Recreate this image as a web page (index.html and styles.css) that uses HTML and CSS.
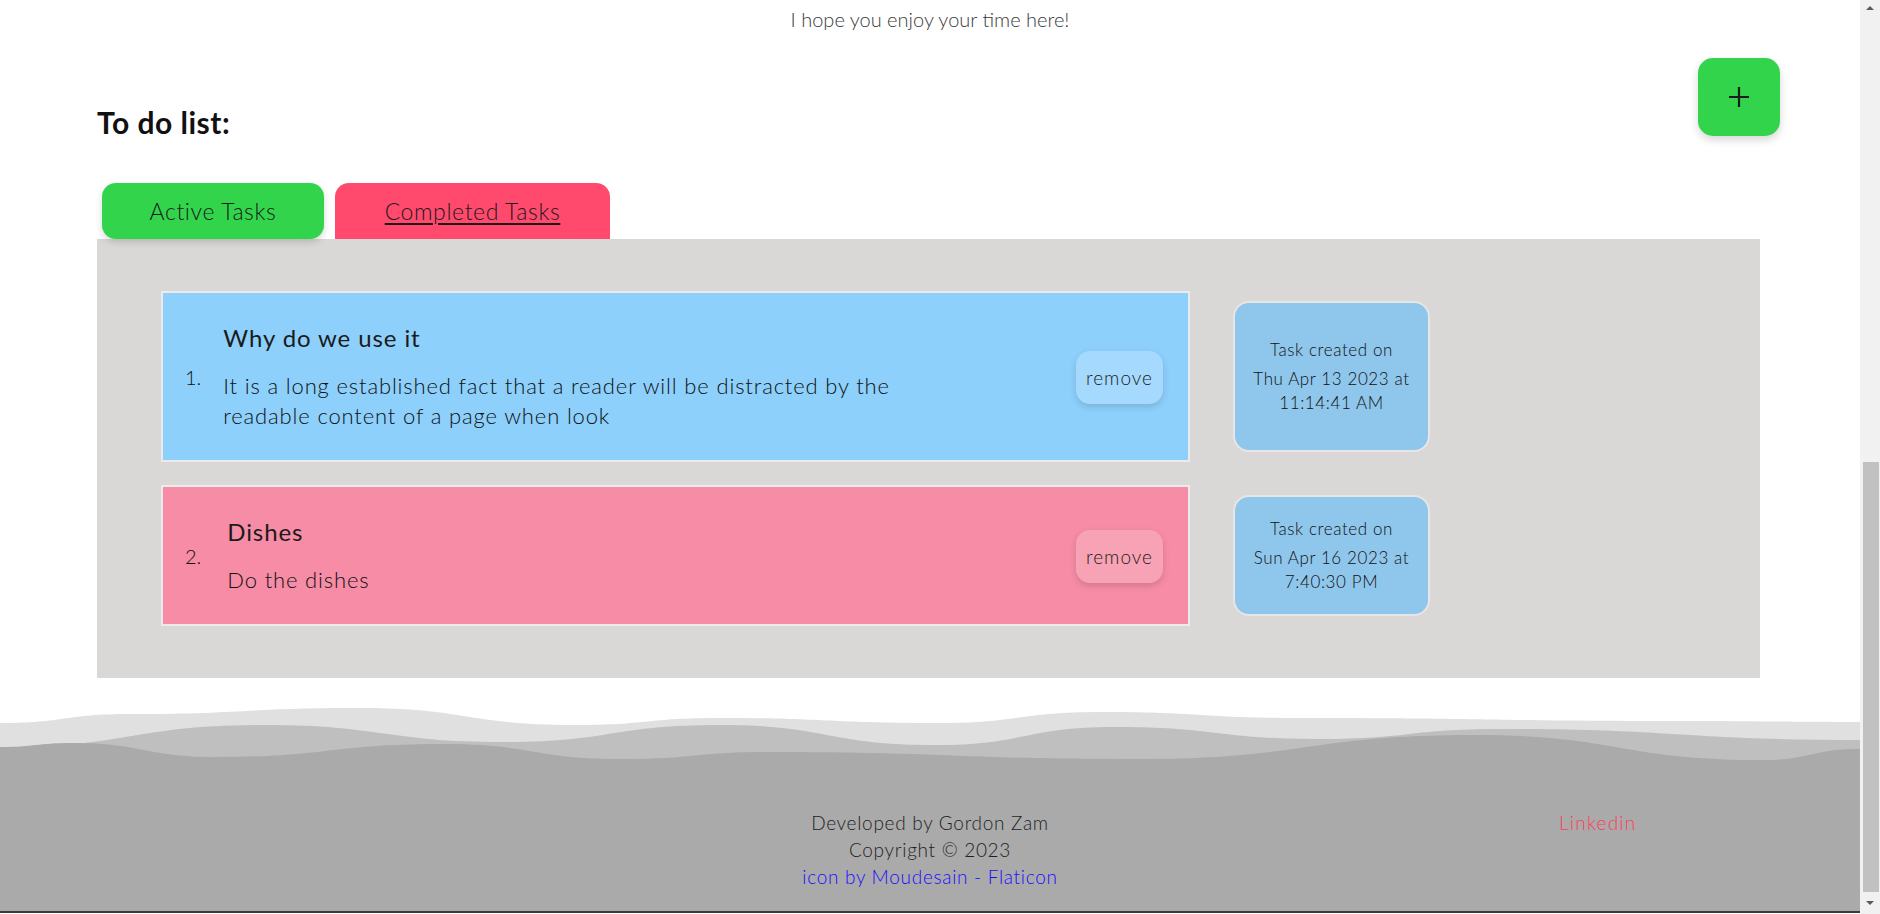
FILE: index.html
```html
<!DOCTYPE html>
<html lang="en">
<head>
<meta charset="utf-8">
<title>To do list</title>
<link rel="stylesheet" href="styles.css">
</head>
<body>
<div class="page">
  <div class="main">
    <p class="greeting">I hope you enjoy your time here!</p>
    <div class="header">
      <h2 class="title">To do list:</h2>
      <button class="add-btn" aria-label="Add task">
        <svg width="22" height="22" viewBox="0 0 22 22"><path d="M11 1v20M1 11h20" stroke="#1c1c1c" stroke-width="2.2" fill="none"/></svg>
      </button>
    </div>
    <div class="tabs">
      <button class="tab tab-active">Active Tasks</button>
      <button class="tab tab-completed">Completed Tasks</button>
    </div>
    <div class="panel">
      <ol class="task-list">
        <li class="task-row">
          <div class="task task-blue">
            <span class="num">1.</span>
            <div class="task-text">
              <h3 class="task-title">Why do we use it</h3>
              <p class="task-desc">It is a long established fact that a reader will be distracted by the readable content of a page when look</p>
            </div>
            <button class="remove remove-blue">remove</button>
          </div>
          <div class="date-card">
            <p class="date-label">Task created on</p>
            <p class="date-value">Thu Apr 13 2023 at<br>11:14:41 AM</p>
          </div>
        </li>
        <li class="task-row">
          <div class="task task-pink">
            <span class="num num-wide">2.</span>
            <div class="task-text">
              <h3 class="task-title">Dishes</h3>
              <p class="task-desc">Do the dishes</p>
            </div>
            <button class="remove remove-pink">remove</button>
          </div>
          <div class="date-card">
            <p class="date-label">Task created on</p>
            <p class="date-value">Sun Apr 16 2023 at<br>7:40:30 PM</p>
          </div>
        </li>
      </ol>
    </div>
    <footer class="footer">
      <svg class="waves" viewBox="0 0 1860 65" preserveAspectRatio="none">
        <path fill="#e0e0e0" d="M0,24 C65,24 65,15 130,15 C245,15 245,9 360,9 C467,9 467,26 575,26 C647,26 647,19 720,19 C827,19 827,24 935,24 C1019,24 1019,13 1103,13 C1201,13 1201,19 1300,19 C1490,19 1490,22 1679,22 C1770,22 1770,23 1860,23 L1860,65 L0,65 Z"/>
        <path fill="#bfbfbf" d="M0,48 C132,48 132,26 264,26 C384,26 384,43 504,43 C612,43 612,26 720,26 C827,26 827,46 935,46 C1025,46 1025,28 1115,28 C1217,28 1217,40 1319,40 C1409,40 1409,30 1499,30 C1680,30 1680,41 1860,41 L1860,65 L0,65 Z"/>
        <path fill="#aaaaaa" d="M0,48 C36,48 36,44 72,44 C144,44 144,58 216,58 C330,58 330,45 444,45 C533,45 533,60 623,60 C695,60 695,53 767,53 C953,53 953,60 1139,60 C1307,60 1307,36 1475,36 C1619,36 1619,61 1763,61 C1811,61 1811,50 1860,50 L1860,65 L0,65 Z"/>
      </svg>
      <div class="footer-body">
        <div class="footer-left"></div>
        <div class="footer-center">
          <p class="footer-line">Developed by Gordon Zam</p>
          <p class="footer-line">Copyright © 2023</p>
          <a class="footer-credit" href="#">icon by Moudesain - Flaticon</a>
        </div>
        <div class="footer-right">
          <a class="linkedin" href="#">Linkedin</a>
        </div>
      </div>
    </footer>
    <div class="bottom-line"></div>
  </div>
  <div class="scrollbar">
    <div class="sb-arrow sb-up"></div>
    <div class="sb-space"></div>
    <div class="sb-thumb"></div>
    <div class="sb-bottom"><div class="sb-arrow sb-down"></div></div>
  </div>
</div>
</body>
</html>
```
FILE: styles.css
```css
html, body {
  margin: 0;
  padding: 0;
}
body {
  font-family: Lato, "Liberation Sans", sans-serif;
  color: #1b1b1b;
  background: #fff;
}
.page {
  display: flex;
  height: 914px;
  overflow: hidden;
}
.main {
  flex: 1;
  min-width: 0;
  display: flex;
  flex-direction: column;
}
.greeting {
  margin: 5px 0 0;
  text-align: center;
  font-size: 20px;
  line-height: 28px;
  font-weight: 300;
  color: #3a3a3a;
}
.header {
  display: flex;
  justify-content: space-between;
  align-items: flex-start;
  height: 78px;
  margin-top: 25px;
  padding: 0 80px 0 97px;
}
.title {
  margin: 50px 0 0;
  font-size: 30px;
  line-height: 28px;
  letter-spacing: 0.5px;
  font-weight: 700;
  color: #111;
}
.add-btn {
  width: 82px;
  height: 78px;
  border: none;
  border-radius: 15px;
  background: #32d44c;
  box-shadow: 0 4px 9px rgba(0, 0, 0, 0.16);
  display: flex;
  align-items: center;
  justify-content: center;
  padding: 0;
}
.tabs {
  display: flex;
  gap: 11px;
  margin-top: 47px;
  padding-left: 102px;
}
.tab {
  height: 56px;
  border: none;
  padding: 0;
  font-family: inherit;
  font-size: 23px;
  letter-spacing: 0.6px;
  font-weight: 300;
  color: #1b1b1b;
}
.tab-active {
  width: 222px;
  border-radius: 14px;
  background: #32d44c;
  box-shadow: 0 3px 7px rgba(0, 0, 0, 0.16);
  position: relative;
  z-index: 1;
}
.tab-completed {
  width: 275px;
  border-radius: 14px 14px 0 0;
  background: #ff4a6d;
  text-decoration: underline;
  text-underline-offset: 3px;
}
.panel {
  margin: 0 100px 0 97px;
  background: #d9d8d6;
  padding: 52px 0 52px 64px;
}
.task-list {
  list-style: none;
  margin: 0;
  padding: 0;
  display: flex;
  flex-direction: column;
  gap: 23px;
}
.task-row {
  display: flex;
  gap: 43px;
}
.task {
  width: 1029px;
  box-sizing: border-box;
  border: 2px solid #ebebeb;
  display: flex;
  align-items: center;
  padding: 30px 25px 29px 22px;
}
.task-blue { background: #8dd0fc; }
.task-pink { background: #f78ca6; }
.num {
  font-size: 20px;
  font-weight: 300;
  color: #111;
  margin-right: 22px;
}
.num-wide {
  margin-right: 26px;
}
.task-text {
  flex: 1;
}
.task-title {
  margin: 0;
  font-size: 24px;
  line-height: 30px;
  letter-spacing: 0.9px;
  font-weight: 400;
}
.task-desc {
  margin: 18px 0 0;
  font-size: 22px;
  line-height: 30px;
  letter-spacing: 0.85px;
  font-weight: 300;
  color: #111;
  max-width: 700px;
}
.remove {
  width: 87px;
  height: 53px;
  border: none;
  border-radius: 14px;
  padding: 0;
  font-family: inherit;
  font-size: 19px;
  letter-spacing: 1px;
  font-weight: 300;
  color: #1b1b1b;
  box-shadow: 0 3px 7px rgba(0, 0, 0, 0.14);
}
.remove-blue { background: #a5d9fd; }
.remove-pink { background: #f8a2b5; }
.date-card {
  width: 197px;
  box-sizing: border-box;
  margin: 10px 0;
  border: 2px solid #e6e6e6;
  border-radius: 16px;
  background: #8fc6eb;
  display: flex;
  flex-direction: column;
  justify-content: center;
  text-align: center;
  font-size: 17px;
  letter-spacing: 0.6px;
  font-weight: 300;
  color: #111;
}
.date-label {
  margin: 0 0 5px;
  line-height: 24px;
}
.date-value {
  margin: 0;
  line-height: 24px;
}
.footer {
  margin-top: 21px;
}
.waves {
  display: block;
  width: 100%;
  height: 65px;
}
.footer-body {
  background: #aaaaaa;
  display: grid;
  grid-template-columns: 1fr 1fr 1fr;
  padding: 45px 0 21px;
  font-size: 19px;
  line-height: 27px;
  letter-spacing: 0.7px;
  font-weight: 300;
}
.footer-center {
  text-align: center;
}
.footer-line {
  margin: 0;
  color: #1e1e1e;
}
.footer-credit {
  color: #1a0dff;
  text-decoration: none;
}
.footer-right {
  padding-left: 319px;
}
.linkedin {
  color: #ff3b5c;
  letter-spacing: 1.2px;
  text-decoration: none;
}
.bottom-line {
  height: 2px;
  background: #3a3a3a;
}
.scrollbar {
  width: 20px;
  background: #f1f1f1;
  display: flex;
  flex-direction: column;
  align-items: center;
}
.sb-arrow {
  width: 0;
  height: 0;
  border-left: 4px solid transparent;
  border-right: 4px solid transparent;
}
.sb-up {
  margin-top: 6px;
  border-bottom: 4px solid #5a5a5a;
}
.sb-down {
  border-top: 4px solid #5a5a5a;
}
.sb-space {
  flex: 1;
}
.sb-thumb {
  width: 16px;
  height: 430px;
  margin-left: 1px;
  background: #c1c1c1;
}
.sb-bottom {
  height: 22px;
  display: flex;
  align-items: center;
  justify-content: center;
}
```
